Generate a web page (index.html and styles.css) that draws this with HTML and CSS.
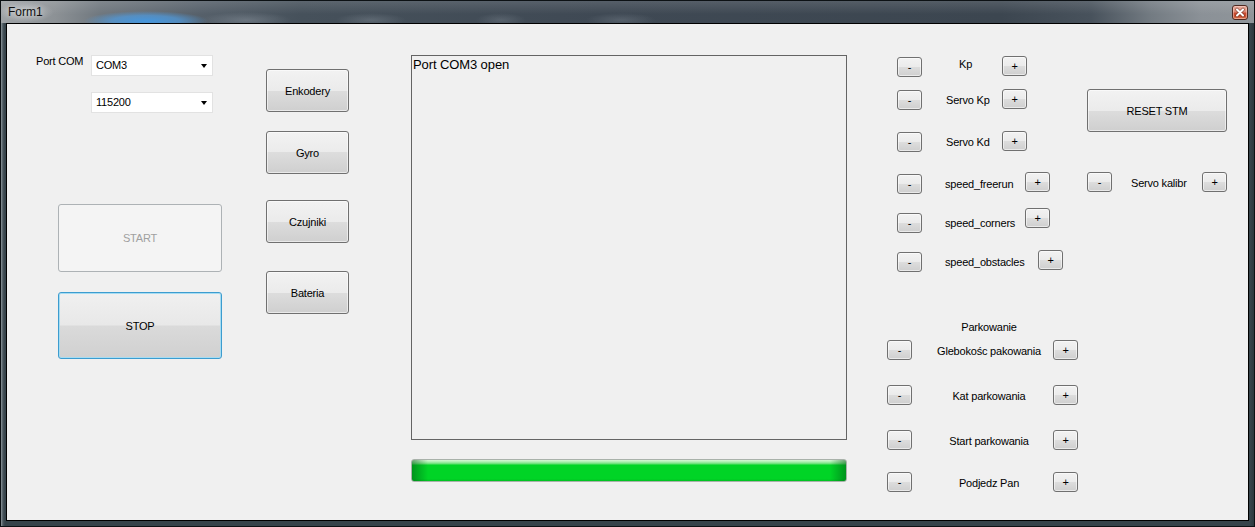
FILE: index.html
```html
<!DOCTYPE html>
<html>
<head>
<meta charset="utf-8">
<title>Form1</title>
<link rel="stylesheet" href="styles.css">
</head>
<body>
<div class="window">
  <div class="titlebar">
    <span class="title">Form1</span>
    <span class="close-btn">
      <svg width="14" height="13" viewBox="0 0 14 13">
        <path d="M4 3.5 L10 9.5 M10 3.5 L4 9.5" stroke="#5a2418" stroke-width="3.6" stroke-linecap="round" opacity="0.55"/>
        <path d="M4 3.5 L10 9.5 M10 3.5 L4 9.5" stroke="#ffffff" stroke-width="2" stroke-linecap="round"/>
      </svg>
    </span>
  </div>
  <div class="client">
    <div class="col-a">
      <div class="port-row">
        <span class="lbl port-lbl">Port COM</span>
        <div class="combo"><span>COM3</span><span class="arrow"></span></div>
      </div>
      <div class="combo combo-baud"><span>115200</span><span class="arrow"></span></div>
      <button class="btn start" disabled>START</button>
      <button class="btn stop">STOP</button>
    </div>

    <div class="col-b">
      <button class="btn mid b1">Enkodery</button>
      <button class="btn mid b2">Gyro</button>
      <button class="btn mid b3">Czujniki</button>
      <button class="btn mid b4">Bateria</button>
    </div>

    <div class="col-c">
      <div class="textbox">Port COM3 open</div>
      <div class="progress"></div>
    </div>

    <div class="col-r">
      <div class="r-top">
        <div class="col-d">
          <div class="prow r1">
            <button class="btn sbtn">-</button>
            <span class="plbl w80 p37 lift3">Kp</span>
            <button class="btn sbtn up1">+</button>
          </div>
          <div class="prow r2">
            <button class="btn sbtn">-</button>
            <span class="plbl w80 p24">Servo Kp</span>
            <button class="btn sbtn up1">+</button>
          </div>
          <div class="prow r3">
            <button class="btn sbtn">-</button>
            <span class="plbl w80 p24">Servo Kd</span>
            <button class="btn sbtn up1">+</button>
          </div>
          <div class="prow r4">
            <button class="btn sbtn">-</button>
            <span class="plbl w103 p23">speed_freerun</span>
            <button class="btn sbtn up2">+</button>
          </div>
          <div class="prow r5">
            <button class="btn sbtn">-</button>
            <span class="plbl w103 p23">speed_corners</span>
            <button class="btn sbtn up5">+</button>
          </div>
          <div class="prow r6">
            <button class="btn sbtn">-</button>
            <span class="plbl w116 p23">speed_obstacles</span>
            <button class="btn sbtn up2">+</button>
          </div>
        </div>
        <div class="col-e">
          <button class="btn reset">RESET STM</button>
          <div class="prow servo-row">
            <button class="btn sbtn">-</button>
            <span class="plbl servo-lbl">Servo kalibr</span>
            <button class="btn sbtn">+</button>
          </div>
        </div>
      </div>
      <div class="parking">
        <div class="park-title">Parkowanie</div>
        <div class="krow k1">
          <button class="btn sbtn">-</button>
          <span class="klbl">Glebokośc pakowania</span>
          <button class="btn sbtn">+</button>
        </div>
        <div class="krow k2">
          <button class="btn sbtn">-</button>
          <span class="klbl">Kat parkowania</span>
          <button class="btn sbtn">+</button>
        </div>
        <div class="krow k3">
          <button class="btn sbtn">-</button>
          <span class="klbl">Start parkowania</span>
          <button class="btn sbtn">+</button>
        </div>
        <div class="krow k4">
          <button class="btn sbtn">-</button>
          <span class="klbl">Podjedz Pan</span>
          <button class="btn sbtn">+</button>
        </div>
      </div>
    </div>
  </div>
</div>
</body>
</html>
```

FILE: styles.css
```css
html, body {
  margin: 0;
  padding: 0;
  background: #000;
}

body {
  font-family: "Liberation Sans", Arial, sans-serif;
  font-size: 11px;
  letter-spacing: -0.2px;
  color: #000;
}

.window {
  width: 1255px;
  height: 527px;
  box-sizing: border-box;
  border: 1px solid #0c1114;
  padding: 0 5px 5px;
  display: flex;
  flex-direction: column;
  background: linear-gradient(to right, #8d979c 0, #4a565d 2px, #36434a 4px, #36434a calc(100% - 4px), #2c373d 100%);
}

/* ---------- title bar ---------- */
.titlebar {
  height: 22px;
  margin: 0 -5px;
  padding: 0 6px 0 7px;
  display: flex;
  justify-content: space-between;
  align-items: flex-start;
  background:
    linear-gradient(to bottom, rgba(255,255,255,0.12), rgba(255,255,255,0) 60%),
    radial-gradient(ellipse 28px 10px at 25px 11px, rgba(230,232,234,0.5), rgba(230,232,234,0)),
    radial-gradient(ellipse 62px 10px at 145px 20px, rgba(70,150,220,1), rgba(80,155,222,0.7) 55%, rgba(95,165,225,0)),
    radial-gradient(ellipse 45px 8px at 245px 19px, rgba(140,150,160,0.45), rgba(140,150,160,0)),
    radial-gradient(ellipse 35px 7px at 370px 19px, rgba(140,150,160,0.35), rgba(140,150,160,0)),
    radial-gradient(ellipse 25px 7px at 500px 19px, rgba(140,150,160,0.3), rgba(140,150,160,0)),
    radial-gradient(ellipse 35px 7px at 620px 19px, rgba(140,150,160,0.3), rgba(140,150,160,0)),
    linear-gradient(to right, #9ea2a5 0, #8c9195 55px, #6f777e 100px, #56606a 200px, #46515b 300px, #3f4954 600px, #3c4650 1000px, #48525c 1090px, #737b82 1150px, #8b9197 1200px, #8f959a 1255px);
}

.title {
  font-family: "Liberation Sans", Arial, sans-serif;
  font-size: 12px;
  letter-spacing: 0;
  line-height: 22px;
  color: #101010;
  text-shadow: 0 0 6px rgba(255,255,255,0.6);
}

.close-btn {
  margin-top: 4px;
  width: 16px;
  height: 15px;
  box-sizing: border-box;
  border: 1px solid #4e2a22;
  border-radius: 3px;
  background: linear-gradient(to bottom, #eab0a2 0, #dc8671 45%, #c8492f 55%, #c9502f 80%, #dd7a55 100%);
  box-shadow: inset 0 0 0 1px rgba(255,220,210,0.45);
  display: flex;
  align-items: center;
  justify-content: center;
}

.close-btn svg {
  display: block;
}

/* ---------- client area ---------- */
.client {
  flex: 1;
  border: 1px solid #000;
  background: #f0f0f0;
  display: flex;
  align-items: flex-start;
}

.lbl {
  line-height: 13px;
}

/* buttons */
.btn {
  box-sizing: border-box;
  margin: 0;
  padding: 0;
  border: 1px solid #707070;
  border-radius: 3px;
  background: linear-gradient(to bottom, #f2f2f2 0, #ebebeb 50%, #dddddd 50%, #cfcfcf 100%);
  box-shadow: inset 0 0 0 1px rgba(255,255,255,0.55);
  font-family: "Liberation Sans", Arial, sans-serif;
  font-size: 11px;
  letter-spacing: -0.2px;
  color: #000;
  display: flex;
  align-items: center;
  justify-content: center;
  flex-shrink: 0;
}

/* column A */
.col-a {
  margin-left: 29px;
  width: 186px;
  display: flex;
  flex-direction: column;
  align-items: flex-start;
}

.port-row {
  margin-top: 31px;
  display: flex;
  align-items: flex-start;
}

.port-lbl {
  width: 55px;
}

.combo {
  width: 122px;
  height: 21px;
  box-sizing: border-box;
  border: 1px solid #e2e2e2;
  background: #fff;
  padding: 0 5px 0 4px;
  display: flex;
  align-items: center;
  justify-content: space-between;
  line-height: 19px;
}

.combo-baud {
  margin-left: 55px;
  margin-top: 16px;
}

.arrow {
  width: 0;
  height: 0;
  border-left: 3.5px solid transparent;
  border-right: 3.5px solid transparent;
  border-top: 4px solid #000;
  margin-top: 1px;
}

.start {
  margin-left: 22px;
  margin-top: 91px;
  width: 164px;
  height: 68px;
  border-color: #adb2b5;
  background: #f4f4f4;
  box-shadow: none;
  color: #a0a0a0;
}

.stop {
  margin-left: 22px;
  margin-top: 20px;
  width: 164px;
  height: 67px;
  border-color: #3c9ccf;
  background: linear-gradient(to bottom, #f0f0f0 0, #e8e8e8 49%, #dadada 51%, #d0d0d0 100%);
  box-shadow: inset 0 0 0 1px #a6dcf2;
}

/* column B */
.col-b {
  margin-left: 44px;
  width: 83px;
  display: flex;
  flex-direction: column;
}

.mid {
  width: 83px;
  height: 43px;
}

.b1 { margin-top: 45px; }
.b2 { margin-top: 19px; }
.b3 { margin-top: 26px; }
.b4 { margin-top: 28px; }

/* column C */
.col-c {
  margin-left: 62px;
  width: 436px;
  display: flex;
  flex-direction: column;
}

.textbox {
  margin-top: 31px;
  height: 385px;
  box-sizing: border-box;
  border: 1px solid #646464;
  background: #f0f0f0;
  padding: 1px 1px;
  font-size: 13px;
  letter-spacing: -0.1px;
  line-height: 15px;
}

.progress {
  margin-top: 19px;
  height: 23px;
  box-sizing: border-box;
  border: 1px solid #a9b2aa;
  border-radius: 3px;
  background:
    linear-gradient(to right, rgba(0,85,20,0.5), rgba(0,85,20,0) 16px, rgba(0,85,20,0) calc(100% - 16px), rgba(0,85,20,0.5)),
    linear-gradient(to bottom, #d6f7d6 0, #a8eeae 2px, #5fe06f 4px, #00d426 5px, #00d426 88%, #00c222 100%);
}

/* right part */
.col-r {
  margin-left: 40px;
  width: 340px;
  display: flex;
  flex-direction: column;
}

.r-top {
  display: flex;
  align-items: flex-start;
}

.col-d {
  margin-left: 10px;
  width: 190px;
  display: flex;
  flex-direction: column;
}

.prow {
  display: flex;
  align-items: flex-start;
  height: 20px;
}

.sbtn {
  width: 25px;
  height: 20px;
}

.plbl {
  box-sizing: border-box;
  line-height: 20px;
  white-space: nowrap;
  flex-shrink: 0;
}

.w80 { width: 80px; }
.w103 { width: 103px; }
.w116 { width: 116px; }
.p37 { padding-left: 37px; }
.p24 { padding-left: 24px; }
.p23 { padding-left: 23px; }
.lift3 { margin-top: -3px; }
.up1 { margin-top: -1px; }
.up2 { margin-top: -2px; }
.up5 { margin-top: -5px; }

.r1 { margin-top: 33px; }
.r2 { margin-top: 13px; }
.r3 { margin-top: 22px; }
.r4 { margin-top: 22px; }
.r5 { margin-top: 19px; }
.r6 { margin-top: 19px; }

.col-e {
  width: 140px;
  display: flex;
  flex-direction: column;
}

.reset {
  margin-top: 65px;
  width: 140px;
  height: 43px;
}

.servo-row {
  margin-top: 40px;
}

.servo-lbl {
  width: 90px;
  padding-left: 19px;
  margin-top: 1px;
}

.parking {
  margin-top: 49px;
  width: 191px;
  display: flex;
  flex-direction: column;
}

.park-title {
  line-height: 13px;
  padding-left: 13px;
  text-align: center;
}

.krow {
  display: flex;
  align-items: flex-start;
  height: 20px;
}

.klbl {
  flex: 1;
  line-height: 20px;
  padding-left: 13px;
  text-align: center;
  white-space: nowrap;
  margin-top: 1px;
}

.k1 { margin-top: 6px; }
.k2 { margin-top: 25px; }
.k3 { margin-top: 25px; }
.k4 { margin-top: 22px; }
```
